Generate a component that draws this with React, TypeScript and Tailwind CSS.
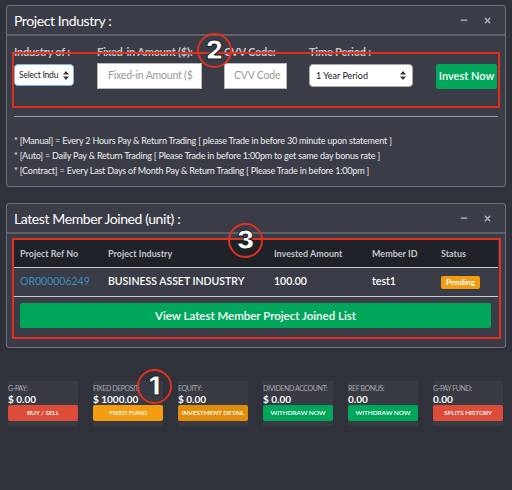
import { Minus, X } from "lucide-react"

const stats = [
  { label: "G-PAY:", value: "$ 0.00", action: "BUY / SELL", color: "bg-[#dd4b39]" },
  { label: "FIXED DEPOSIT:", value: "$ 1000.00", action: "FIXED FUND", color: "bg-[#f39c12]" },
  { label: "EQUITY:", value: "$ 0.00", action: "INVESTMENT DETAIL", color: "bg-[#e08e0b]" },
  { label: "DIVIDEND ACCOUNT:", value: "$ 0.00", action: "WITHDRAW NOW", color: "bg-[#00a65a]" },
  { label: "REF BONUS:", value: "0.00", action: "WITHDRAW NOW", color: "bg-[#00a65a]" },
  { label: "G-PAY FUND:", value: "0.00", action: "SPLITS HISTORY", color: "bg-[#dd4b39]" },
]

function UpDown() {
  return (
    <svg width="6" height="9" viewBox="0 0 6 9" className="shrink-0">
      <path d="M3 0 L6 3.5 L0 3.5 Z M3 9 L6 5.5 L0 5.5 Z" fill="#333" />
    </svg>
  )
}

function PanelHeader({ title }: { title: string }) {
  return (
    <div className="flex h-[30px] items-center justify-between border-b-2 border-[#5d6068] px-[7px]">
      <span className="text-[14px] tracking-[-0.4px] text-white">{title}</span>
      <div className="flex items-center gap-[14px] pr-[6px] text-[#b9bbc1]">
        <Minus size={10} strokeWidth={3} />
        <X size={9} strokeWidth={3.5} />
      </div>
    </div>
  )
}

function Badge({ n, className }: { n: string; className: string }) {
  return (
    <div
      className={`absolute flex h-[35px] w-[35px] items-center justify-center rounded-full border-2 border-[#e0301e] pb-[1px] font-['Inter',sans-serif] text-[26px] leading-none font-black text-white ${className}`}
      style={{ WebkitTextStroke: "1px #1a1a1a" }}
    >
      {n}
    </div>
  )
}

const label = "h-[12px] whitespace-nowrap text-[11px] font-bold leading-[12px] tracking-[-0.2px] text-[#c5c7cc]"

export default function App() {
  return (
    <div className="relative min-h-[490px] bg-[#2f323b] px-[6px] pt-[5px] font-['Lato',sans-serif]">
      {/* project industry */}
      <section className="h-[182px] rounded-[3px] border border-[#6e7179] bg-[#3a3d47]">
        <PanelHeader title="Project Industry :" />
        <div className="px-[7px] pt-[10px]">
          <div className="flex items-start gap-[22px]">
            <div className="w-[61px]">
              <div className={label}>Industry of :</div>
              <div className="mt-[6px] flex h-[22px] w-[60px] items-center justify-between gap-[2px] rounded-[4px] border border-[#7fb6e6] bg-white px-[4px] text-[8.5px] tracking-[-0.2px] text-[#222]">
                <span className="whitespace-nowrap">Select Indu</span>
                <UpDown />
              </div>
            </div>
            <div className="w-[105px]">
              <div className={label}>Fixed-in Amount ($):</div>
              <div className="mt-[5px] flex h-[26px] items-center overflow-hidden border border-[#bbb] bg-white px-[10px] text-[10.5px] tracking-[-0.2px] whitespace-nowrap text-[#999]">
                Fixed-in Amount ($
              </div>
            </div>
            <div className="w-[63px]">
              <div className={label}>CVV Code:</div>
              <div className="mt-[5px] flex h-[26px] items-center border border-[#bbb] bg-white px-[9px] text-[10.5px] tracking-[-0.2px] whitespace-nowrap text-[#999]">
                CVV Code
              </div>
            </div>
            <div className="w-[104px]">
              <div className={label}>Time Period :</div>
              <div className="mt-[6px] flex h-[23px] items-center justify-between rounded-[4px] border border-[#aaa] bg-white px-[6px] text-[9px] text-[#222]">
                <span>1 Year Period</span>
                <UpDown />
              </div>
            </div>
            <button className="mt-[18px] ml-px h-[25px] w-[61px] rounded-[2px] bg-[#00a65a] text-[11px] font-semibold text-white">
              Invest Now
            </button>
          </div>
          <div className="mt-[27px] h-px bg-[#9a9ca2]" />
          <div className="mt-[16px] text-[9px] leading-[15px] tracking-[-0.2px] text-[#eeeeee]">
            <p>* [Manual] = Every 2 Hours Pay &amp; Return Trading [ please Trade in before 30 minute upon statement ]</p>
            <p>* [Auto] = Daily Pay &amp; Return Trading [ Please Trade in before 1:00pm to get same day bonus rate ]</p>
            <p>* [Contract] = Every Last Days of Month Pay &amp; Return Trading [ Please Trade in before 1:00pm ]</p>
          </div>
        </div>
      </section>

      {/* latest members */}
      <section className="mt-[16px] h-[145px] rounded-[3px] border border-[#6e7179] bg-[#3a3d47]">
        <PanelHeader title="Latest Member Joined (unit) :" />
        <div className="px-[7px] pt-[6px]">
          <div className="grid h-[27px] grid-cols-[88px_166px_98px_69px_1fr] items-center bg-[#1f2229] pl-[6px] text-[9px] font-bold text-[#c3c5ca]">
            <span>Project Ref No</span>
            <span>Project Industry</span>
            <span>Invested Amount</span>
            <span>Member ID</span>
            <span>Status</span>
          </div>
          <div className="grid h-[30px] grid-cols-[88px_166px_98px_69px_1fr] items-center border-y border-[#c9cbd0] pl-[6px] text-[10.5px] text-white">
            <span className="text-[#3c8dbc]">OR000006249</span>
            <span className="font-semibold">BUSINESS ASSET INDUSTRY</span>
            <span className="font-semibold">100.00</span>
            <span className="font-semibold">test1</span>
            <span>
              <span className="inline-block rounded-[2px] bg-[#f39c12] px-[5px] py-[2px] text-[8px] leading-[9px] font-bold text-white">Pending</span>
            </span>
          </div>
          <button className="mx-[6px] mt-[6px] h-[25px] w-[471px] rounded-[2px] bg-[#00a65a] text-[11.5px] font-semibold text-white">
            View Latest Member Project Joined List
          </button>
        </div>
      </section>

      {/* stats */}
      <div className="mt-[33px] flex gap-[15px] pl-[2px]">
        {stats.map((s) => (
          <div key={s.label} className="w-[70px] bg-[#383b44] pb-[5px]">
            <div className="pt-[2px] whitespace-nowrap text-[7px] leading-[10px] tracking-[-0.4px] text-[#a8aab0]">{s.label}</div>
            <div className="text-[10px] font-bold leading-[12px] text-white">{s.value}</div>
            <div className={`flex h-[16px] items-center justify-center rounded-[2px] ${s.color} whitespace-nowrap text-[6.5px] font-semibold tracking-[-0.1px] text-white`}>
              {s.action}
            </div>
          </div>
        ))}
      </div>

      {/* annotations */}
      <div className="pointer-events-none absolute left-[12px] top-[52px] h-[56px] w-[488px] border-2 border-[#e0301e]" />
      <div className="pointer-events-none absolute left-[12px] top-[238px] h-[101px] w-[489px] border-2 border-[#e0301e]" />
      <Badge n="2" className="left-[197px] top-[33px]" />
      <Badge n="3" className="left-[228px] top-[223px]" />
      <Badge n="1" className="left-[137px] top-[369px]" />
    </div>
  )
}
